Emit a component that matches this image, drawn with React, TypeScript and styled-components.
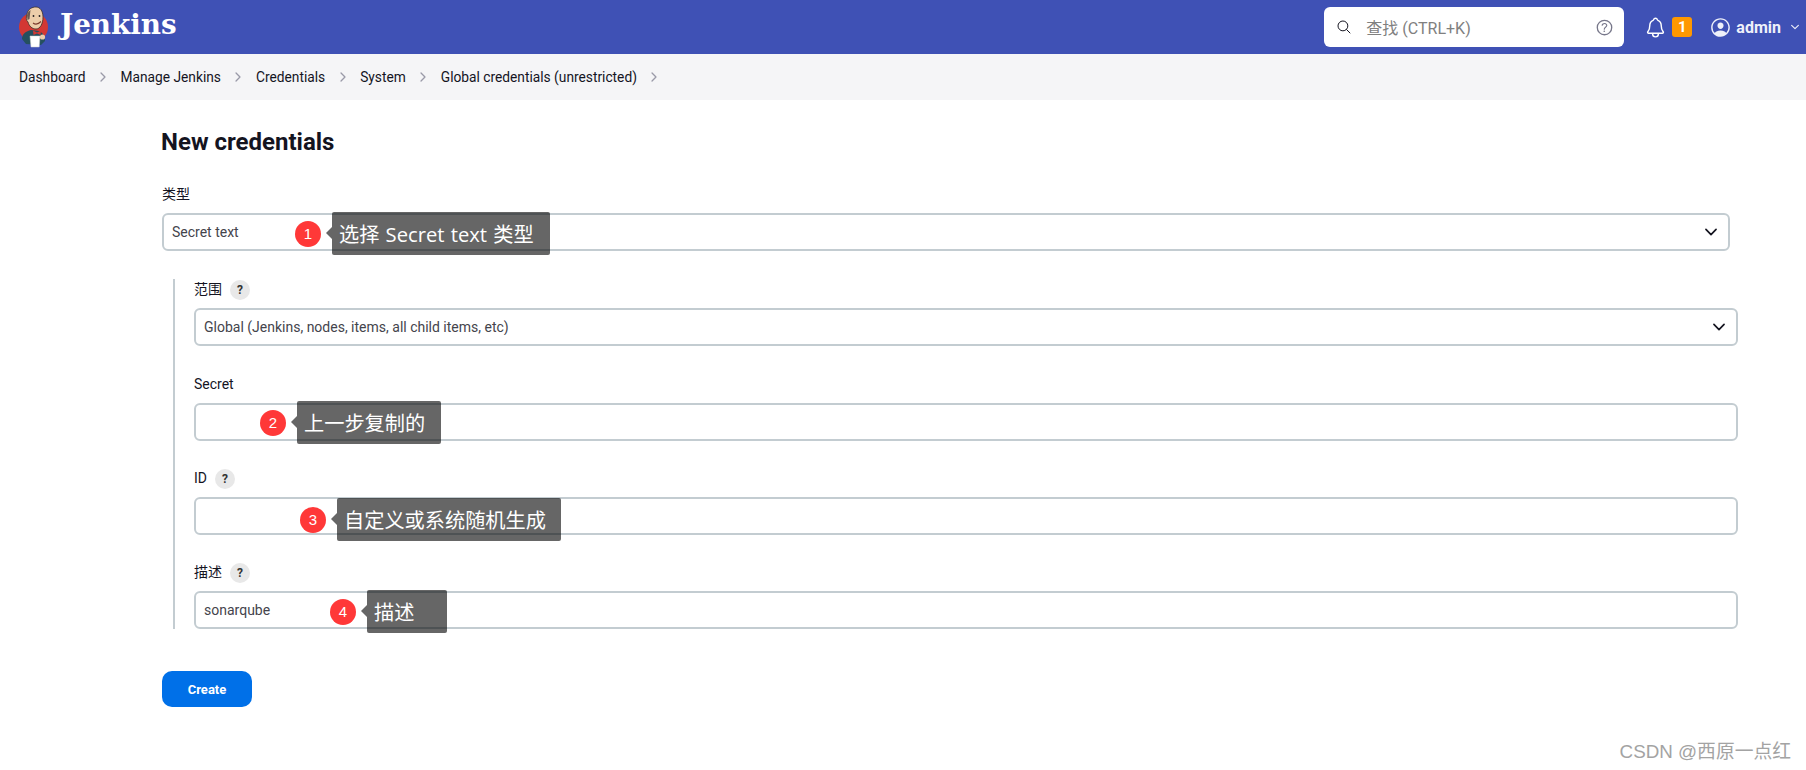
import React from 'react';
import styled, { createGlobalStyle } from 'styled-components';
import {
  IoSearchOutline,
  IoHelpCircleOutline,
  IoNotificationsOutline,
  IoPersonCircleOutline,
  IoChevronDown,
  IoChevronForward,
} from 'react-icons/io5';

const GlobalStyle = createGlobalStyle`
  html, body {
    margin: 0;
    padding: 0;
    height: 100%;
    background: #fff;
    overflow: hidden;
    font-family: Roboto, "Noto Sans CJK SC", sans-serif;
    color: #14141f;
  }
  * { box-sizing: border-box; }
`;

const Page = styled.div`
  position: relative;
  width: 1806px;
  height: 770px;
`;

const Header = styled.header`
  display: flex;
  align-items: center;
  height: 54px;
  padding: 0 5px 0 19px;
  background: #3f51b5;
  color: #fff;
`;

const Brand = styled.div`
  display: flex;
  align-items: center;
  gap: 11px;
  flex: 1;
`;

const Wordmark = styled.span`
  font-family: "DejaVu Serif", "Liberation Serif", serif;
  font-weight: 700;
  font-size: 27.8px;
  line-height: 54px;
  margin-top: -4px;
`;

const SearchBox = styled.div`
  display: flex;
  align-items: center;
  width: 300px;
  height: 40px;
  padding: 0 9px 0 12px;
  background: #fff;
  border-radius: 6px;
  color: #14141f;
  font-size: 16px;
  svg { flex: none; }
`;

const SearchText = styled.span`
  flex: 1;
  margin-left: 14px;
  color: #808080;
`;

const Bell = styled.div`
  display: flex;
  margin-left: 20px;
`;

const Badge = styled.span`
  display: flex;
  align-items: center;
  justify-content: center;
  width: 20px;
  height: 20px;
  margin-left: 5px;
  background: #ff9800;
  border-radius: 3px;
  font-size: 15px;
  font-weight: 700;
`;

const UserMenu = styled.div`
  display: flex;
  align-items: center;
  margin-left: 17px;
  font-size: 16px;
  font-weight: 700;
  color: #eef0fa;
`;

const UserName = styled.span`
  margin: 0 8px 0 4px;
`;

const Breadcrumbs = styled.nav`
  display: flex;
  align-items: center;
  height: 46px;
  padding-left: 19px;
  background: #f5f5f7;
  font-size: 13.75px;
  svg { color: #9a9aa8; margin: 0 10.5px; }
`;

const Content = styled.main`
  padding: 26px 0 0 162px;
`;

const Title = styled.h1`
  margin: 0 0 27px -1px;
  font-size: 24px;
  line-height: 32px;
  font-weight: 700;
  color: #14141f;
`;

const TopField = styled.div`
  width: 1568px;
  margin-bottom: 28px;
`;

const Scope = styled.section`
  display: flex;
  flex-direction: column;
  gap: 28px;
  width: 1565px;
  margin-left: 11px;
  padding: 1px 0 0 19px;
  border-left: 2px solid #c3ccd1;
`;

const ScopeField = styled.div`
  &:first-child { margin-bottom: 1px; }
`;

const Label = styled.label`
  display: flex;
  align-items: flex-start;
  height: 20px;
  margin-bottom: 8px;
  font-size: 14px;
  line-height: 18px;
  color: #14141f;
`;

const Help = styled.span`
  display: inline-flex;
  align-items: center;
  justify-content: center;
  width: 20px;
  height: 20px;
  margin-left: 8px;
  border-radius: 50%;
  background: #e8e8e8;
  font-size: 12px;
  font-weight: 700;
  color: #333;
`;

const Control = styled.div`
  position: relative;
  height: 38px;
`;

const controlStyles = `
  display: block;
  width: 100%;
  height: 38px;
  padding: 0 8px;
  background: #fff;
  border: 2px solid #c3ccd1;
  border-radius: 6px;
  font-family: Roboto, "Noto Sans CJK SC", sans-serif;
  font-size: 14px;
  color: #44444c;
  outline: none;
`;

const Select = styled.select`
  ${controlStyles}
  appearance: none;
`;

const Input = styled.input`
  ${controlStyles}
`;

const Caret = styled.span`
  position: absolute;
  top: 10px;
  right: 10px;
  display: flex;
  color: #14141f;
  pointer-events: none;
`;

const Callout = styled.div<{ $left: number; $top: number }>`
  position: absolute;
  left: ${(props) => props.$left}px;
  top: ${(props) => props.$top}px;
  display: flex;
  align-items: center;
  height: 43px;
  gap: 11px;
`;

const Marker = styled.span`
  display: flex;
  align-items: center;
  justify-content: center;
  width: 26px;
  height: 26px;
  border-radius: 50%;
  background: #ff3838;
  color: #fff;
  font-family: "Liberation Sans", sans-serif;
  font-size: 15px;
`;

const Note = styled.div<{ $width: number }>`
  position: relative;
  width: ${(props) => props.$width}px;
  height: 43px;
  padding: 1px 0 0 7px;
  background: rgba(0, 0, 0, 0.6);
  border-radius: 2px;
  color: #fff;
  font-family: "Open Sans", "Noto Sans CJK SC", sans-serif;
  font-size: 20.2px;
  word-spacing: 1px;
  line-height: 43px;
  white-space: nowrap;
  &::before {
    content: '';
    position: absolute;
    left: -6px;
    top: 15px;
    border-style: solid;
    border-width: 6px 6px 6px 0;
    border-color: transparent rgba(0, 0, 0, 0.6) transparent transparent;
  }
`;

const CreateButton = styled.button`
  display: block;
  width: 90px;
  height: 36px;
  margin-top: 42px;
  border: none;
  border-radius: 10px;
  background: #0070e8;
  color: #fff;
  font-family: Roboto, sans-serif;
  font-size: 13px;
  font-weight: 700;
`;

const Watermark = styled.div`
  position: absolute;
  right: 15px;
  bottom: 7px;
  font-family: "Liberation Sans", "Noto Sans CJK SC", sans-serif;
  font-size: 18.8px;
  color: #a3a3a3;
`;

// rough redraw of the butler, only ~30px wide on screen
const JenkinsLogo = () => (
  <svg width="30" height="42" viewBox="0 0 30 42">
    <circle cx="14.5" cy="21" r="14.5" fill="#d33833" />
    <path d="M3 33 C3 28 7 25 12 24 L20 25 C24 27 26 30 26 35 L22 39 L7 38 Z" fill="#25505f" />
    <path d="M8 8 C9 3 13 1 17 1 C21 1 24 5 24 11 C24 18 21 23 17 23 C13 23 10 20 9 16 C7 15 7 10 8 8 Z" fill="#eccdaa" stroke="#3d3029" strokeWidth="0.8" />
    <path d="M8 9 C9 6 10 5 11.5 4 C11 7 11 10 10.5 13 L8.5 14 Z" fill="#6b5a50" />
    <circle cx="14.5" cy="10" r="0.9" fill="#231f20" />
    <circle cx="20.5" cy="10" r="0.9" fill="#231f20" />
    <path d="M14 17 C16 18.5 19 18.5 22 15.5" fill="none" stroke="#7a3b2e" strokeWidth="1.1" />
    <path d="M14 24.5 L18 26.5 L22 24.5 L21.5 29 L18 27.5 L14.5 29 Z" fill="#d33833" />
    <path d="M11 30 H21 L20.2 41 H12 Z" fill="#fff" stroke="#cfcfcf" strokeWidth="0.5" />
    <circle cx="23.5" cy="31" r="2.6" fill="#eccdaa" />
  </svg>
);

type CalloutMark = { n: number; text: string; left: number; top: number; width: number };

const Mark = ({ n, text, left, top, width }: CalloutMark) => (
  <Callout $left={left} $top={top}>
    <Marker>{n}</Marker>
    <Note $width={width}>{text}</Note>
  </Callout>
);

const App: React.FC = () => (
  <Page>
    <GlobalStyle />
    <Header>
      <Brand>
        <JenkinsLogo />
        <Wordmark>Jenkins</Wordmark>
      </Brand>
      <SearchBox>
        <IoSearchOutline size={16} />
        <SearchText>查找 (CTRL+K)</SearchText>
        <IoHelpCircleOutline size={21} color="#77778a" />
      </SearchBox>
      <Bell>
        <IoNotificationsOutline size={23} />
      </Bell>
      <Badge>1</Badge>
      <UserMenu>
        <IoPersonCircleOutline size={23} />
        <UserName>admin</UserName>
        <IoChevronDown size={12} />
      </UserMenu>
    </Header>
    <Breadcrumbs>
      <span>Dashboard</span>
      <IoChevronForward size={14} />
      <span>Manage Jenkins</span>
      <IoChevronForward size={14} />
      <span>Credentials</span>
      <IoChevronForward size={14} />
      <span>System</span>
      <IoChevronForward size={14} />
      <span>Global credentials (unrestricted)</span>
      <IoChevronForward size={14} />
    </Breadcrumbs>
    <Content>
      <Title>New credentials</Title>
      <TopField>
        <Label>类型</Label>
        <Control>
          <Select defaultValue="secret">
            <option value="secret">Secret text</option>
          </Select>
          <Caret><IoChevronDown size={18} /></Caret>
          <Mark n={1} text="选择 Secret text 类型" left={133} top={-1} width={218} />
        </Control>
      </TopField>
      <Scope>
        <ScopeField>
          <Label>范围<Help>?</Help></Label>
          <Control>
            <Select defaultValue="global">
              <option value="global">Global (Jenkins, nodes, items, all child items, etc)</option>
            </Select>
            <Caret><IoChevronDown size={18} /></Caret>
          </Control>
        </ScopeField>
        <ScopeField>
          <Label>Secret</Label>
          <Control>
            <Input />
            <Mark n={2} text="上一步复制的" left={66} top={-2} width={144} />
          </Control>
        </ScopeField>
        <ScopeField>
          <Label>ID<Help>?</Help></Label>
          <Control>
            <Input />
            <Mark n={3} text="自定义或系统随机生成" left={106} top={1} width={224} />
          </Control>
        </ScopeField>
        <ScopeField>
          <Label>描述<Help>?</Help></Label>
          <Control>
            <Input defaultValue="sonarqube" />
            <Mark n={4} text="描述" left={136} top={-1} width={80} />
          </Control>
        </ScopeField>
      </Scope>
      <CreateButton>Create</CreateButton>
    </Content>
    <Watermark>CSDN @西原一点红</Watermark>
  </Page>
);

export default App;
